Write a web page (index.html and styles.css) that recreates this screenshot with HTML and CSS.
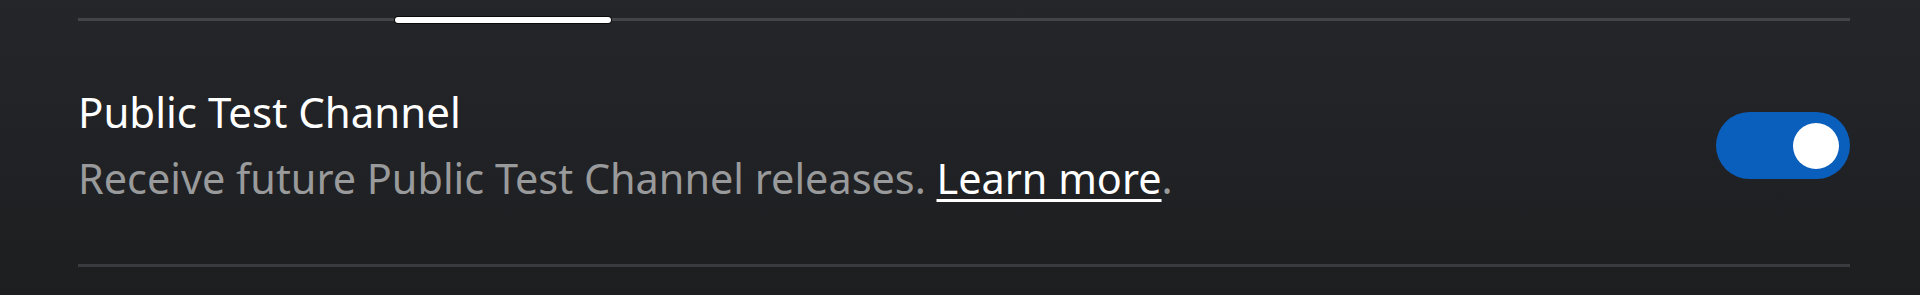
FILE: index.html
```html
<!DOCTYPE html>
<html lang="en">
<head>
  <meta charset="UTF-8">
  <meta name="viewport" content="width=device-width, initial-scale=1.0">
  <title>Windows Insider Settings</title>
  <link rel="stylesheet" href="styles.css">
</head>
<body>
  <div class="page">
    <div class="tabs">
      <div class="tab-indicator"></div>
    </div>
    <div class="setting">
      <div class="setting-text">
        <div class="setting-title">Public Test Channel</div>
        <div class="setting-desc">Receive future Public Test Channel releases. <a href="#">Learn more</a>.</div>
      </div>
      <div class="toggle on">
        <div class="knob"></div>
      </div>
    </div>
  </div>
</body>
</html>
```

FILE: styles.css
```css
html, body {
  height: 100%;
}
body {
  margin: 0;
  background: linear-gradient(#25262a, #1d1e20);
  font-family: "Noto Sans", "Open Sans", sans-serif;
  overflow: hidden;
}
.page {
  padding: 0 70px 0 78px;
}
.tabs {
  height: 18px;
  border-bottom: 3px solid #434446;
  display: flex;
  align-items: flex-end;
}
.tab-indicator {
  margin-left: 317px;
  margin-bottom: -5px;
  width: 216px;
  height: 6px;
  background: #ffffff;
  border-radius: 3px;
  box-shadow: 0 0 0 1px #0c0c0d;
}
.setting {
  display: flex;
  align-items: center;
  justify-content: space-between;
  height: 237px;
  padding-top: 6px;
  border-bottom: 3px solid #3a3b3e;
}
.setting-title, .setting-desc {
  white-space: nowrap;
}
.setting-title {
  font-size: 42px;
  line-height: 64px;
  color: #ffffff;
}
.setting-desc {
  font-size: 41.4px;
  line-height: 68px;
  color: #999a9b;
}
.setting-desc a {
  color: #ffffff;
  text-decoration: underline;
  text-decoration-thickness: 3px;
  text-underline-offset: 5px;
}
.toggle {
  width: 134px;
  height: 67px;
  border-radius: 34px;
  background: #0a5fbc;
  display: flex;
  align-items: center;
  justify-content: flex-end;
  box-sizing: border-box;
  padding-right: 11px;
}
.knob {
  width: 46px;
  height: 46px;
  border-radius: 50%;
  background: #ffffff;
}
```
